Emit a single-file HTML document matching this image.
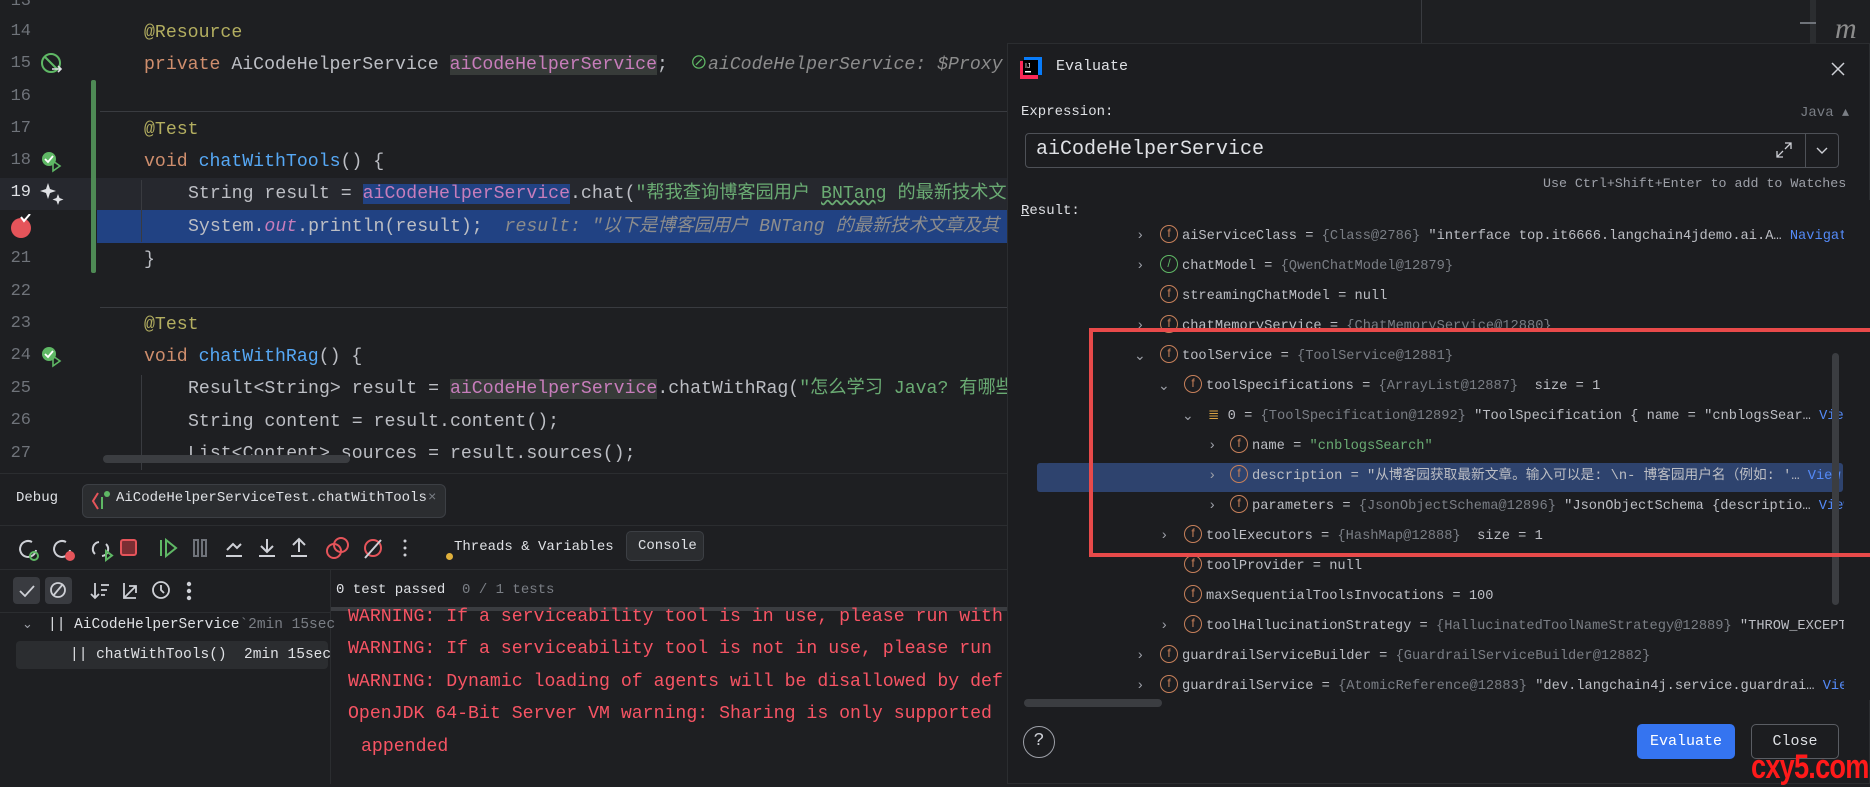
<!DOCTYPE html>
<html><head><meta charset="utf-8"><style>
*{margin:0;padding:0;box-sizing:border-box}
body{width:1870px;height:784px;background:#1e1f22;overflow:hidden;position:relative;font-family:"Liberation Mono","Noto Sans CJK SC",monospace;color:#bcbec4}
.a{position:absolute;white-space:pre}
.ln{position:absolute;width:31px;text-align:right;font-size:17px;color:#6f737a;left:0}
.code{position:absolute;font-size:18.2px;white-space:pre;line-height:32px}
.an{color:#b3ae60}.kw{color:#cf8e6d}.md{color:#56a8f5}.fd{color:#c77dbb}.st{color:#6aab73}.hi{background:#373b39}.sel{background:#214283}.hint{color:#8c8c8c;font-style:italic}
.dlg{position:absolute;left:1007px;top:43px;width:863px;height:741px;background:#1c1d20;border:1px solid #2b2d30;z-index:5}
.row{position:absolute;font-size:13.7px;white-space:pre;height:30px;line-height:30px;color:#bcbec4}
.g{color:#7a7e85}.blu{color:#548af7}.str{color:#6aab73}
.fi{display:inline-block;width:18px;height:18px;border:1.5px solid #c7805a;border-radius:50%;color:#c7805a;font-size:12px;line-height:15px;text-align:center;vertical-align:middle;margin-right:4px;margin-top:-3px;font-family:"Liberation Sans",sans-serif}
.arr{position:absolute;color:#9da0a8;font-size:14px}
.con{position:absolute;left:348px;font-size:18.2px;color:#f75464;white-space:pre}
</style></head><body>
<div class="a" style="left:0;top:178px;width:1007px;height:32px;background:#26282e"></div>
<div class="a" style="left:97px;top:210px;width:910px;height:33px;background:#214283"></div>
<div class="a" style="left:91px;top:80px;width:5px;height:193px;background:#4e8a55;border-radius:2px"></div>
<div class="a" style="left:100px;top:111px;width:910px;height:1px;background:#393b40"></div>
<div class="a" style="left:100px;top:307px;width:910px;height:1px;background:#393b40"></div>
<div class="a" style="left:141px;top:180px;width:1px;height:62px;background:#393b40"></div>
<div class="a" style="left:141px;top:375px;width:1px;height:95px;background:#393b40"></div>
<div class="ln" style="top:-8px">13</div>
<div class="ln" style="top:22px">14</div>
<div class="ln" style="top:54px">15</div>
<div class="ln" style="top:87px">16</div>
<div class="ln" style="top:119px">17</div>
<div class="ln" style="top:151px">18</div>
<div class="ln" style="top:183px;color:#dfe1e5">19</div>
<div class="ln" style="top:249px">21</div>
<div class="ln" style="top:282px">22</div>
<div class="ln" style="top:314px">23</div>
<div class="ln" style="top:346px">24</div>
<div class="ln" style="top:379px">25</div>
<div class="ln" style="top:411px">26</div>
<div class="ln" style="top:444px">27</div>
<svg class="a" style="left:40px;top:52px" width="24" height="24"><circle cx="11" cy="11" r="9" fill="none" stroke="#5fb865" stroke-width="2"/><path d="M5 5L17 17" stroke="#5fb865" stroke-width="2"/><path d="M12 17h9M18 14l3 3-3 3" stroke="#dfe1e5" stroke-width="1.6" fill="none"/></svg>
<svg class="a" style="left:40px;top:150px" width="24" height="24"><circle cx="9" cy="9" r="7" fill="#5fb865"/><path d="M5 9l3 3 5-6" stroke="#fff" stroke-width="1.8" fill="none"/><path d="M13 11v10l7-5z" fill="none" stroke="#5fb865" stroke-width="1.6"/></svg>
<svg class="a" style="left:40px;top:345px" width="24" height="24"><circle cx="9" cy="9" r="7" fill="#5fb865"/><path d="M5 9l3 3 5-6" stroke="#fff" stroke-width="1.8" fill="none"/><path d="M13 11v10l7-5z" fill="none" stroke="#5fb865" stroke-width="1.6"/></svg>
<svg class="a" style="left:40px;top:182px" width="26" height="26"><path d="M8 1l2 6 6 2-6 2-2 6-2-6-6-2 6-2z" fill="#dfe1e5"/><path d="M18 12l1.5 4 4 1.5-4 1.5-1.5 4-1.5-4-4-1.5 4-1.5z" fill="#dfe1e5"/></svg>
<svg class="a" style="left:9px;top:214px" width="26" height="26"><circle cx="12" cy="14" r="10" fill="#e5545a"/><path d="M12 3l3 4 6-7" stroke="#fff" stroke-width="2" fill="none"/></svg>
<div class="code" style="left:144px;top:17px"><span class="an">@Resource</span></div>
<div class="code" style="left:144px;top:49px"><span class="kw">private</span> AiCodeHelperService <span class="fd hi">aiCodeHelperService</span>;  <span style="color:#5fb865;font-style:normal">⊘</span><span class="hint">aiCodeHelperService: $Proxy</span></div>
<div class="code" style="left:144px;top:114px"><span class="an">@Test</span></div>
<div class="code" style="left:144px;top:146px"><span class="kw">void</span> <span class="md">chatWithTools</span>() {</div>
<div class="code" style="left:188px;top:178px">String result = <span class="fd sel">aiCodeHelperService</span>.chat(<span class="st">"帮我查询博客园用户 <u style="text-decoration-style:wavy;text-decoration-color:#6aab73">BNTang</u> 的最新技术文章</span></div>
<div class="code" style="left:188px;top:211px">System.<span class="fd" style="font-style:italic">out</span>.println(result);  <span class="hint">result: "以下是博客园用户 BNTang 的最新技术文章及其</span></div>
<div class="code" style="left:144px;top:244px">}</div>
<div class="code" style="left:144px;top:309px"><span class="an">@Test</span></div>
<div class="code" style="left:144px;top:341px"><span class="kw">void</span> <span class="md">chatWithRag</span>() {</div>
<div class="code" style="left:188px;top:373px">Result&lt;String&gt; result = <span class="fd hi">aiCodeHelperService</span>.chatWithRag(<span class="st">"怎么学习 Java? 有哪些</span></div>
<div class="code" style="left:188px;top:406px">String content = result.content();</div>
<div class="code" style="left:188px;top:438px">List&lt;Content&gt; sources = result.sources();</div>
<div class="a" style="left:103px;top:455px;width:247px;height:8px;background:#3b3d41;border-radius:4px"></div>
<div class="a" style="left:1421px;top:0;width:1px;height:44px;background:#393b40"></div>
<div class="a" style="left:1810px;top:0;width:6px;height:44px;background:#2b2d30"></div>
<div class="a" style="left:1800px;top:22px;width:16px;height:2px;background:#6f737a"></div>
<div class="a" style="left:1835px;top:12px;font-size:30px;font-style:italic;color:#8c8c8c;font-family:'Liberation Serif',serif">m</div>
<div class="a" style="left:0;top:473px;width:1010px;height:311px;background:#1e1f22;border-top:1px solid #2b2d30"></div>
<div class="a" style="left:16px;top:490px;font-size:14px;color:#dfe1e5">Debug</div>
<div class="a" style="left:82px;top:484px;width:364px;height:34px;background:#2b2d30;border:1px solid #3c3f44;border-radius:6px"></div>
<svg class="a" style="left:90px;top:490px" width="22" height="22"><path d="M8 3L3 11l5 8" stroke="#e5545a" stroke-width="2" fill="none"/><path d="M12 7v12" stroke="#5fb865" stroke-width="2"/><circle cx="17" cy="4" r="3" fill="#5fb865"/></svg>
<div class="a" style="left:116px;top:490px;font-size:14px;color:#dfe1e5">AiCodeHelperServiceTest.chatWithTools</div>
<div class="a" style="left:428px;top:490px;font-size:14px;color:#7a7e85">×</div>
<div class="a" style="left:0;top:525px;width:1010px;height:1px;background:#2b2d30"></div>
<svg class="a" style="left:16px;top:534px" width="420" height="30" fill="none" stroke-width="2">
<path d="M16 8a8 8 0 1 0 4 8" stroke="#ced0d6"/><circle cx="18" cy="22" r="4" stroke="#5fb865"/>
<path d="M50 8a8 8 0 1 0 4 8" stroke="#ced0d6"/><circle cx="54" cy="22" r="5" fill="#e5545a" stroke="none"/>
<path d="M83 8a7 7 0 0 0-4 12M86 22a7 7 0 0 0 4-12" stroke="#ced0d6"/><path d="M90 17v9l6-4.5z" stroke="#5fb865"/>
<rect x="105" y="6" width="15" height="15" rx="2" fill="#7a2e33" stroke="#e5545a"/>
<path d="M145 6v16" stroke="#5fb865"/><path d="M150 6v16l10-8z" stroke="#5fb865"/>
<rect x="178" y="6" width="4" height="16" stroke="#6f737a"/><rect x="186" y="6" width="4" height="16" stroke="#6f737a"/>
<path d="M210 22h16M211 16l6-6 4 4 4-4" stroke="#ced0d6"/>
<path d="M243 22h16M251 5v13M245 12l6 6 6-6" stroke="#ced0d6"/>
<path d="M275 22h16M283 18V5M277 11l6-6 6 6" stroke="#ced0d6"/>
<circle cx="318" cy="17" r="7" stroke="#e5545a"/><circle cx="325" cy="11" r="7" stroke="#e5545a"/>
<circle cx="357" cy="14" r="8" stroke="#e5545a"/><path d="M349 24l16-18" stroke="#ced0d6"/>
<circle cx="389" cy="7" r="1.5" fill="#ced0d6" stroke="none"/><circle cx="389" cy="14" r="1.5" fill="#ced0d6" stroke="none"/><circle cx="389" cy="21" r="1.5" fill="#ced0d6" stroke="none"/>
</svg>
<div class="a" style="left:446px;top:553px;width:7px;height:7px;border-radius:50%;background:#e0b03c"></div>
<div class="a" style="left:454px;top:539px;font-size:14px;color:#dfe1e5">Threads &amp; Variables</div>
<div class="a" style="left:626px;top:531px;width:78px;height:30px;background:#2b2d30;border:1px solid #3c3f44;border-radius:5px"></div>
<div class="a" style="left:638px;top:538px;font-size:14px;color:#dfe1e5">Console</div>
<div class="a" style="left:0;top:569px;width:1010px;height:1px;background:#2b2d30"></div>
<div class="a" style="left:13px;top:577px;width:27px;height:27px;background:#393b40;border-radius:4px"></div>
<div class="a" style="left:45px;top:577px;width:27px;height:27px;background:#393b40;border-radius:4px"></div>
<svg class="a" style="left:13px;top:577px" width="200" height="30" fill="none" stroke="#ced0d6" stroke-width="1.8">
<path d="M7 14l5 5 9-10"/><circle cx="45" cy="13" r="7"/><path d="M40 19l10-12"/>
<path d="M82 6v15M78 17l4 4 4-4M88 8h8M88 13h6M88 18h4"/>
<path d="M111 6v15h12M112 20l11-11M116 9h7v7"/>
<circle cx="148" cy="13" r="8"/><path d="M148 8v5l3 3"/>
<circle cx="176" cy="7" r="1.3" fill="#ced0d6"/><circle cx="176" cy="14" r="1.3" fill="#ced0d6"/><circle cx="176" cy="21" r="1.3" fill="#ced0d6"/>
</svg>
<div class="a" style="left:336px;top:582px;font-size:14px;color:#dfe1e5">0 test passed <span style="color:#7a7e85"> 0 / 1 tests</span></div>
<div class="a" style="left:330px;top:607px;width:680px;height:4px;background:#3b3d41"></div>
<div class="a" style="left:330px;top:570px;width:1px;height:214px;background:#2b2d30"></div>
<div class="a" style="left:0;top:612px;width:330px;height:1px;background:#2b2d30"></div>
<div class="a" style="left:22px;top:617px;font-size:13px;color:#9da0a8">⌄</div>
<div class="a" style="left:48px;top:617px;font-size:14.5px;color:#dfe1e5">|| AiCodeHelperService<span style="color:#7a7e85">`2min 15sec</span></div>
<div class="a" style="left:16px;top:641px;width:312px;height:28px;background:#2b2d30;border-radius:4px"></div>
<div class="a" style="left:70px;top:647px;font-size:14.5px;color:#dfe1e5">|| chatWithTools()  2min 15sec</div>
<div class="con" style="top:607px">WARNING: If a serviceability tool is in use, please run with</div>
<div class="con" style="top:639px">WARNING: If a serviceability tool is not in use, please run</div>
<div class="con" style="top:672px">WARNING: Dynamic loading of agents will be disallowed by def</div>
<div class="con" style="top:704px">OpenJDK 64-Bit Server VM warning: Sharing is only supported</div>
<div class="con" style="top:737px;left:361px">appended</div>

<div class="dlg"></div>
<div style="position:absolute;left:0;top:0;width:1870px;height:784px;z-index:6">
<svg class="a" style="left:1020px;top:57px" width="22" height="22"><rect x="4" y="0" width="18" height="18" fill="#087cfa"/><rect x="0" y="4" width="18" height="18" fill="#fe2857"/><rect x="3" y="3" width="15" height="15" fill="#000"/><text x="5" y="11" font-size="7" fill="#fff" font-family="Liberation Sans">IJ</text><rect x="5" y="14" width="6" height="1.5" fill="#fff"/></svg>
<div class="a" style="left:1056px;top:58px;font-size:15px;color:#dfe1e5">Evaluate</div>
<svg class="a" style="left:1830px;top:61px" width="16" height="16"><path d="M2 2l12 12M14 2L2 14" stroke="#ced0d6" stroke-width="1.5"/></svg>
<div class="a" style="left:1021px;top:104px;font-size:14px;color:#dfe1e5">Expression:</div>
<div class="a" style="left:1800px;top:104px;font-size:14px;color:#7a7e85">Java ▴</div>
<div class="a" style="left:1025px;top:133px;width:814px;height:35px;border:1px solid #4e5157;border-radius:4px;background:#1c1d20"></div>
<div class="a" style="left:1805px;top:134px;width:1px;height:33px;background:#4e5157"></div>
<div class="a" style="left:1036px;top:138px;font-size:20px;color:#dfe1e5">aiCodeHelperService</div>
<svg class="a" style="left:1774px;top:140px" width="20" height="20"><path d="M11 3h6v6M17 3l-6 6M9 17H3v-6M3 17l6-6" stroke="#ced0d6" stroke-width="1.3" fill="none"/></svg>
<svg class="a" style="left:1815px;top:144px" width="14" height="14"><path d="M2 4l5 5 5-5" stroke="#ced0d6" stroke-width="1.4" fill="none"/></svg>
<div class="a" style="left:1543px;top:176px;font-size:13.3px;color:#9da0a8">Use Ctrl+Shift+Enter to add to Watches</div>
<div class="a" style="left:1021px;top:203px;font-size:14px;color:#dfe1e5"><u>R</u>esult:</div>
<div class="a" style="left:1037px;top:463px;width:806px;height:29px;background:#2e436e;border-radius:3px"></div>
<div class="arr" style="left:1136px;top:228px">›</div>
<div class="row" style="left:1160px;top:222px"><span class="fi">f</span>aiServiceClass = <span class="g">{Class@2786}</span> "interface top.it6666.langchain4jdemo.ai.A… <span class="blu">Navigate</span></div>
<div class="arr" style="left:1136px;top:258px">›</div>
<div class="row" style="left:1160px;top:252px"><span class="fi" style="border-color:#5fb865;color:#5fb865">/</span>chatModel = <span class="g">{QwenChatModel@12879}</span></div>
<div class="row" style="left:1160px;top:282px"><span class="fi">f</span>streamingChatModel = null</div>
<div class="arr" style="left:1136px;top:318px">›</div>
<div class="row" style="left:1160px;top:312px"><span class="fi">f</span>chatMemoryService = <span class="g">{ChatMemoryService@12880}</span></div>
<div class="arr" style="left:1134px;top:348px">⌄</div>
<div class="row" style="left:1160px;top:342px"><span class="fi">f</span>toolService = <span class="g">{ToolService@12881}</span></div>
<div class="arr" style="left:1158px;top:378px">⌄</div>
<div class="row" style="left:1184px;top:372px"><span class="fi">f</span>toolSpecifications = <span class="g">{ArrayList@12887}</span>  size = 1</div>
<div class="arr" style="left:1182px;top:408px">⌄</div>
<div class="row" style="left:1208px;top:402px"><span style="color:#d9a343">≣</span> 0 = <span class="g">{ToolSpecification@12892}</span> "ToolSpecification { name = "cnblogsSear… <span class="blu">View</span></div>
<div class="arr" style="left:1208px;top:438px">›</div>
<div class="row" style="left:1230px;top:432px"><span class="fi">f</span>name = <span class="str">"cnblogsSearch"</span></div>
<div class="arr" style="left:1208px;top:468px">›</div>
<div class="row" style="left:1230px;top:462px"><span class="fi">f</span>description = "从博客园获取最新文章。输入可以是: \n- 博客园用户名（例如: '… <span class="blu">View</span></div>
<div class="arr" style="left:1208px;top:498px">›</div>
<div class="row" style="left:1230px;top:492px"><span class="fi">f</span>parameters = <span class="g">{JsonObjectSchema@12896}</span> "JsonObjectSchema {descriptio… <span class="blu">View</span></div>
<div class="arr" style="left:1160px;top:528px">›</div>
<div class="row" style="left:1184px;top:522px"><span class="fi">f</span>toolExecutors = <span class="g">{HashMap@12888}</span>  size = 1</div>
<div class="row" style="left:1184px;top:552px"><span class="fi">f</span>toolProvider = null</div>
<div class="row" style="left:1184px;top:582px"><span class="fi">f</span>maxSequentialToolsInvocations = 100</div>
<div class="arr" style="left:1160px;top:618px">›</div>
<div class="row" style="left:1184px;top:612px"><span class="fi">f</span>toolHallucinationStrategy = <span class="g">{HallucinatedToolNameStrategy@12889}</span> "THROW_EXCEPTIO</div>
<div class="arr" style="left:1136px;top:648px">›</div>
<div class="row" style="left:1160px;top:642px"><span class="fi">f</span>guardrailServiceBuilder = <span class="g">{GuardrailServiceBuilder@12882}</span></div>
<div class="arr" style="left:1136px;top:678px">›</div>
<div class="row" style="left:1160px;top:672px"><span class="fi">f</span>guardrailService = <span class="g">{AtomicReference@12883}</span> "dev.langchain4j.service.guardrai… <span class="blu">View</span></div>
<div class="a" style="left:1844px;top:200px;width:26px;height:500px;background:#1c1d20"></div>
<div class="a" style="left:1832px;top:353px;width:7px;height:252px;background:#3b3d41;border-radius:4px"></div>
<div class="a" style="left:1024px;top:699px;width:138px;height:8px;background:#3b3d41;border-radius:4px"></div>
<div class="a" style="left:1089px;top:328px;width:790px;height:229px;border:4px solid #e84a4a"></div>
<div class="a" style="left:1023px;top:726px;width:32px;height:32px;border:1.5px solid #9da0a8;border-radius:50%;text-align:center;line-height:29px;font-size:18px;color:#ced0d6">?</div>
<div class="a" style="left:1637px;top:724px;width:98px;height:35px;background:#3574f0;border-radius:5px;text-align:center;line-height:35px;font-size:15px;color:#fff">Evaluate</div>
<div class="a" style="left:1751px;top:724px;width:88px;height:35px;border:1px solid #5a5d63;border-radius:5px;text-align:center;line-height:33px;font-size:15px;color:#dfe1e5">Close</div>
<div class="a" style="left:1751px;top:748px;font-size:34px;font-weight:bold;color:#ff1a1a;font-family:'Liberation Sans',sans-serif;transform:scaleX(0.8);transform-origin:left;letter-spacing:-1px">cxy5.com</div>
</div>
</body></html>
